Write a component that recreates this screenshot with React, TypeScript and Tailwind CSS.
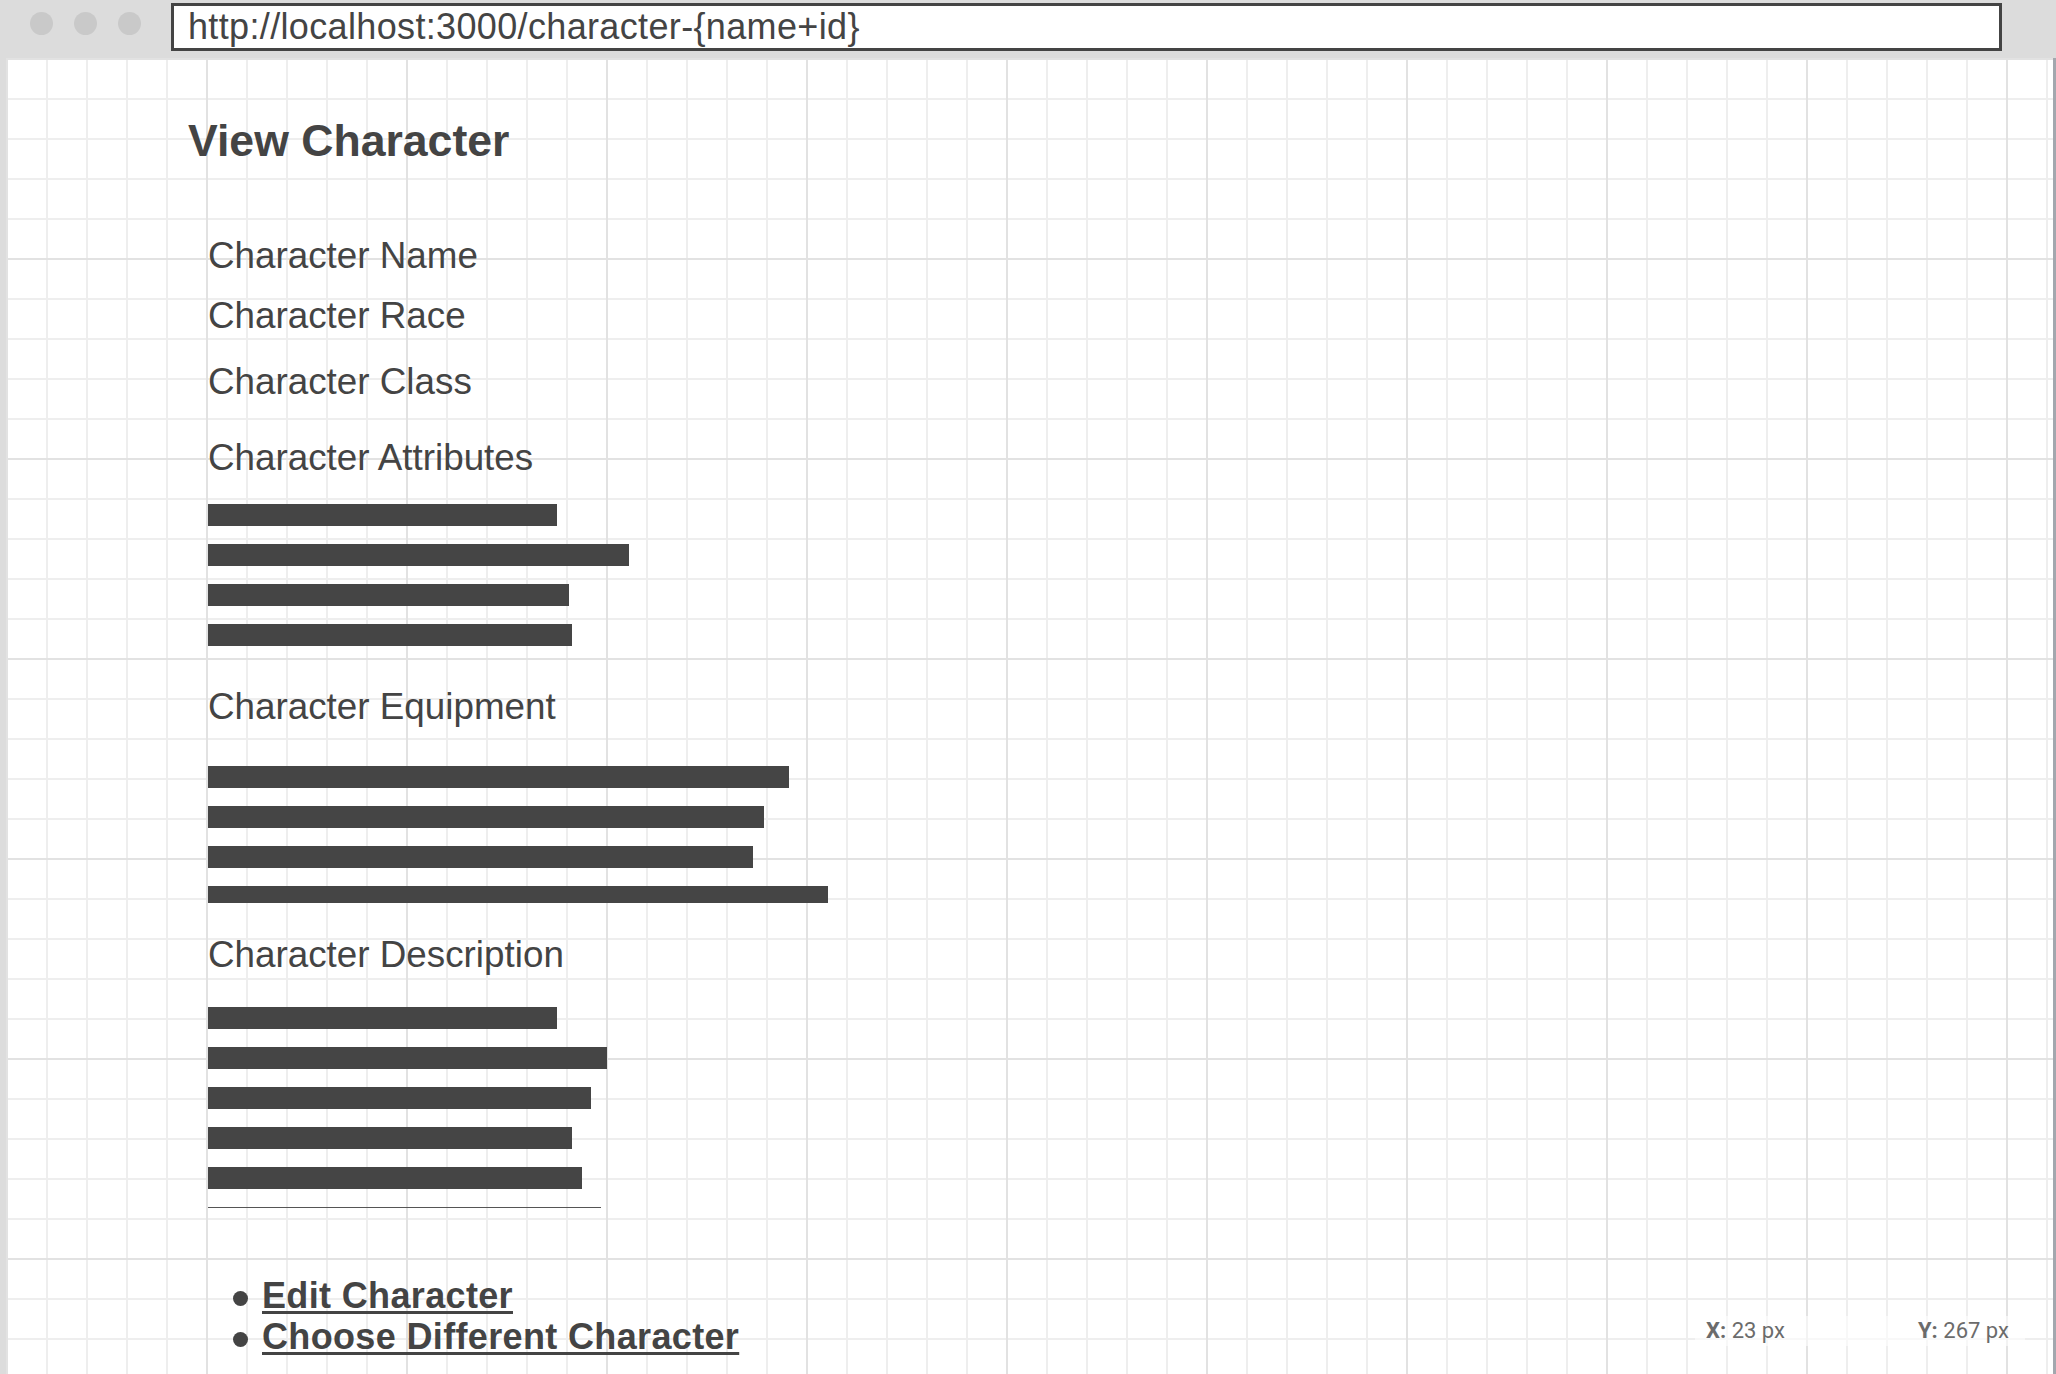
import React from 'react';

// widths of the placeholder bars, in px order top to bottom
const attributeBars = ['w-[349px]', 'w-[421px]', 'w-[361px]', 'w-[364px]'];
const equipmentBars = ['w-[581px] h-[22px]', 'w-[556px] h-[22px]', 'w-[545px] h-[22px]', 'w-[620px] h-[17px]'];
const descriptionBars = ['w-[349px]', 'w-[399px]', 'w-[383px]', 'w-[364px]', 'w-[374px]'];

const Bars: React.FC<{ items: string[]; className: string }> = ({ items, className }) => (
  <div className={`flex flex-col gap-[18px] ${className}`}>
    {items.map((w, i) => (
      <div key={i} className={`${w} h-[22px] bg-[#454545]`} />
    ))}
  </div>
);

const App: React.FC = () => {
  return (
    <div className="w-[2056px] h-[1374px] bg-[#dcdcdc] flex flex-col overflow-hidden font-['Liberation_Sans',Arial,sans-serif] text-[#444]">
      {/* Browser bar */}
      <header className="h-[58px] shrink-0 flex items-start pl-[30px]">
        <div className="flex gap-[21px] mt-[12px]">
          <span className="w-[23px] h-[23px] rounded-full bg-[#c9c9c9]" />
          <span className="w-[23px] h-[23px] rounded-full bg-[#c9c9c9]" />
          <span className="w-[23px] h-[23px] rounded-full bg-[#c9c9c9]" />
        </div>
        <div className="ml-[30px] mt-[3px] h-[48px] w-[1831px] border-[3px] border-[#444] bg-white flex items-center pl-[14px]">
          <span className="text-[36px] leading-none tracking-[0.35px]">http://localhost:3000/character-{'{name+id}'}</span>
        </div>
      </header>

      {/* Page canvas */}
      <main className="relative flex-1 ml-[6px] w-[2050px] border-r-[3px] border-[#a3a7ae] bg-white bg-[image:linear-gradient(to_right,#e2e2e2_2px,transparent_2px),linear-gradient(to_bottom,#e2e2e2_2px,transparent_2px),linear-gradient(to_right,#eeeeee_2px,transparent_2px),linear-gradient(to_bottom,#eeeeee_2px,transparent_2px)] bg-[size:200px_200px,200px_200px,40px_40px,40px_40px]">
        <div className="flex flex-col pl-[182px] pt-[61px]">
          <h1 className="text-[44.6px] font-bold leading-none">View Character</h1>

          <section className="ml-[20px] flex flex-col text-[36.8px] leading-none">
            <p className="mt-[74px]">Character Name</p>
            <p className="mt-[24px]">Character Race</p>
            <p className="mt-[29px]">Character Class</p>

            <p className="mt-[39px]">Character Attributes</p>
            <Bars items={attributeBars} className="mt-[27px]" />

            <p className="mt-[43px]">Character Equipment</p>
            <div className="flex flex-col gap-[18px] mt-[40px]">
              {equipmentBars.map((w, i) => (
                <div key={i} className={`${w} bg-[#454545]`} />
              ))}
            </div>

            <p className="mt-[34px]">Character Description</p>
            <Bars items={descriptionBars} className="mt-[34px]" />

            <div className="mt-[18px] w-[393px] h-px bg-[#555]" />

            {/* Links */}
            <ul className="mt-[67px] ml-[25px] flex flex-col text-[36px] font-bold leading-[41px] tracking-[0.35px]">
              <li className="flex items-center">
                <span className="w-[15px] h-[15px] rounded-full bg-[#444] mt-[6px]" />
                <a href="#" className="ml-[14px] underline decoration-[3px] underline-offset-[3px]">Edit Character</a>
              </li>
              <li className="flex items-center">
                <span className="w-[15px] h-[15px] rounded-full bg-[#444] mt-[6px]" />
                <a href="#" className="ml-[14px] underline decoration-[3px] underline-offset-[3px]">Choose Different Character</a>
              </li>
            </ul>
          </section>
        </div>

        {/* Cursor position readout */}
        <div className="absolute left-[1689px] top-[1258px] w-[330px] h-[30px] bg-white/60 flex items-center pl-[11px] font-['Roboto',sans-serif] text-[22px] leading-none text-[#6b6b6b]">
          <span className="w-[212px]"><b className="font-bold">X:</b> 23 px</span>
          <span><b className="font-bold">Y:</b> 267 px</span>
        </div>
      </main>
    </div>
  );
};

export default App;
